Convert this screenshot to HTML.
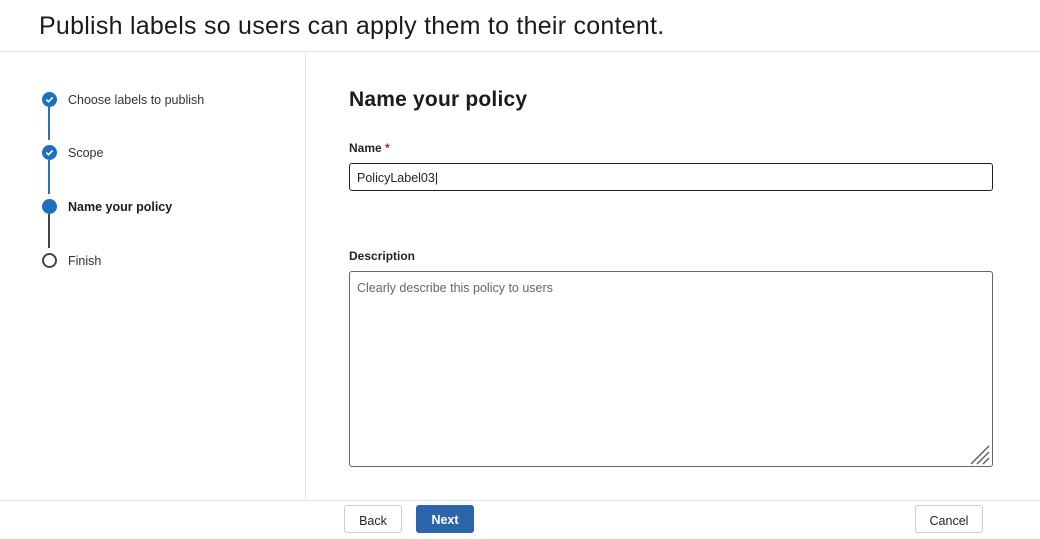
<!DOCTYPE html>
<html><head><style>
body{margin:0;width:1040px;height:539px;background:#fff;font-family:"Liberation Sans",sans-serif;color:#242424;position:relative;overflow:hidden}
.a{position:absolute}
h1{position:absolute;left:39px;top:12px;margin:0;font-size:25px;font-weight:normal;color:#1b1b1b;letter-spacing:0.25px}
.step{position:absolute;left:68px;font-size:12.5px;color:#333}
.dot{position:absolute;left:42px;width:15px;height:15px;border-radius:50%;box-sizing:border-box}
.line{position:absolute;left:48px;width:2px}
.btn{position:absolute;top:505px;height:28px;border-radius:3px;font-size:12.5px;box-sizing:border-box;text-align:center;line-height:30px}
</style></head><body>
<h1>Publish labels so users can apply them to their content.</h1>
<div class="a" style="left:0;top:51px;width:1040px;height:1px;background:#e1e1e1"></div>
<div class="a" style="left:305px;top:52px;width:1px;height:448px;background:#e1e1e1"></div>
<div class="a" style="left:0;top:500px;width:1040px;height:1px;background:#e1e1e1"></div>

<div class="line" style="top:107px;height:33px;background:#2a6fb7"></div>
<div class="line" style="top:160px;height:34px;background:#2a6fb7"></div>
<div class="line" style="top:214px;height:34px;background:#444"></div>
<div class="dot" style="top:92px;background:#1f6fc0"><svg width="15" height="15" viewBox="0 0 15 15"><path d="M4.3 7.6l2.2 2.1 4.2-4.3" stroke="#fff" stroke-width="1.6" fill="none"/></svg></div>
<div class="dot" style="top:145px;background:#1f6fc0"><svg width="15" height="15" viewBox="0 0 15 15"><path d="M4.3 7.6l2.2 2.1 4.2-4.3" stroke="#fff" stroke-width="1.6" fill="none"/></svg></div>
<div class="dot" style="top:199px;background:#1f6fc0"></div>
<div class="dot" style="top:253px;border:2px solid #444;background:#fff"></div>
<div class="step" style="top:93px">Choose labels to publish</div>
<div class="step" style="top:146px">Scope</div>
<div class="step" style="top:200px;font-weight:bold;color:#1b1b1b">Name your policy</div>
<div class="step" style="top:254px">Finish</div>

<div class="a" style="left:349px;top:88px;font-size:21px;font-weight:bold;color:#1b1b1b;letter-spacing:0.2px">Name your policy</div>
<div class="a" style="left:349px;top:141px;font-size:12px;font-weight:bold">Name <span style="color:#a4262c">*</span></div>
<div class="a" style="left:349px;top:163px;width:644px;height:28px;border:1px solid #222;border-radius:3px;box-sizing:border-box;font-size:12.5px;line-height:28px;padding-left:7px">PolicyLabel03|</div>
<div class="a" style="left:349px;top:249px;font-size:12px;font-weight:bold">Description</div>
<div class="a" style="left:349px;top:271px;width:644px;height:196px;border:1px solid #666;border-radius:3px;box-sizing:border-box;font-size:12.5px;padding:9px 7px;color:#666">Clearly describe this policy to users</div>
<svg class="a" style="left:968px;top:443px" width="22" height="22"><path d="M21 3L3 21M21 9L9 21M21 15L15 21" stroke="#555" stroke-width="1.3"/></svg>

<div class="btn" style="left:344px;width:58px;border:1px solid #ccc">Back</div>
<div class="btn" style="left:416px;width:58px;background:#2b66ad;color:#fff;font-weight:bold">Next</div>
<div class="btn" style="left:915px;width:68px;border:1px solid #ccc">Cancel</div>
</body></html>
